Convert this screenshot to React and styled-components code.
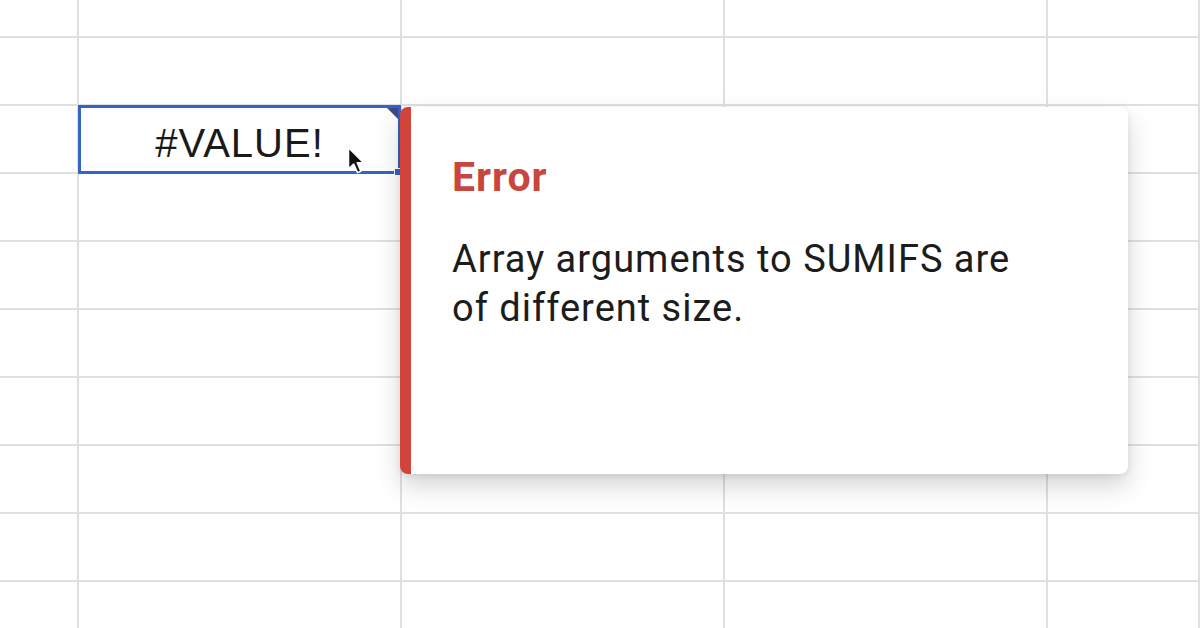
import React from "react";
import styled, { createGlobalStyle } from "styled-components";

const GlobalStyle = createGlobalStyle`
  html, body {
    margin: 0;
    padding: 0;
    background: #ffffff;
    overflow: hidden;
  }
  * { box-sizing: border-box; }
`;

const COLS = [79, 323, 323, 323, 152];
const ROWS = [38, 68, 68, 68, 68, 68, 68, 68, 68, 68];

const Sheet = styled.div`
  position: relative;
  width: 1200px;
  height: 628px;
  overflow: hidden;
  background: #ffffff;
`;

const Grid = styled.div`
  display: grid;
  grid-template-columns: ${COLS.map((c) => `${c}px`).join(" ")};
  grid-template-rows: ${ROWS.map((r) => `${r}px`).join(" ")};
`;

const Cell = styled.div`
  position: relative;
  border-right: 2px solid #e0e0e0;
  border-bottom: 2px solid #e0e0e0;
  display: flex;
  align-items: center;
  justify-content: center;
  font-family: "Liberation Sans", Arial, sans-serif;
  font-size: 40px;
  letter-spacing: 1px;
  color: #1a1a1a;
  padding-top: 8px;

  ${(p) =>
    p.$selected &&
    `
    &::after {
      content: "";
      position: absolute;
      left: -1px;
      top: -1px;
      right: -1px;
      bottom: -2px;
      border: 3px solid #3266c0;
      pointer-events: none;
    }
  `}
`;

/* error marker in the cell's top-right corner */
const ErrorCorner = styled.span`
  position: absolute;
  top: 2px;
  right: 2px;
  width: 0;
  height: 0;
  border-top: 11px solid #3f4a86;
  border-left: 11px solid transparent;
`;

/* fill handle at the selection's bottom-right */
const FillHandle = styled.span`
  position: absolute;
  right: -2px;
  bottom: -4px;
  width: 8px;
  height: 8px;
  background: #3266c0;
  border: 1px solid #ffffff;
  border-right: none;
  z-index: 2;
`;

const Pointer = styled.svg`
  position: absolute;
  left: 347px;
  top: 146px;
  z-index: 3;
`;

const Tooltip = styled.div`
  position: absolute;
  left: 400px;
  top: 107px;
  width: 728px;
  height: 367px;
  background: #ffffff;
  border-left: 11px solid #d2433b;
  border-radius: 8px;
  box-shadow: 0 12px 26px rgba(0, 0, 0, 0.17), 0 2px 6px rgba(0, 0, 0, 0.08);
  padding: 50px 40px 0 41px;
  font-family: Roboto, "Noto Sans", sans-serif;
  z-index: 4;
`;

const Title = styled.div`
  font-size: 41px;
  line-height: 41px;
  font-weight: 700;
  letter-spacing: 1px;
  color: #c9463f;
`;

const Message = styled.div`
  margin-top: 37px;
  font-size: 38px;
  line-height: 49px;
  letter-spacing: 1px;
  color: #1c1c1c;
  max-width: 590px;
`;

export default function App() {
  const cells = [];
  ROWS.forEach((_, r) => {
    COLS.forEach((__, c) => {
      const selected = r === 2 && c === 1;
      cells.push(
        <Cell key={`${r}-${c}`} $selected={selected}>
          {selected && (
            <>
              #VALUE!
              <ErrorCorner />
              <FillHandle />
            </>
          )}
        </Cell>
      );
    });
  });

  return (
    <>
      <GlobalStyle />
      <Sheet>
        <Grid>{cells}</Grid>
        <Pointer width="18" height="29" viewBox="0 0 12 19">
          <path
            d="M1 1 L1 15 L4.5 11.8 L7 17.6 L9.2 16.7 L6.8 11 L11 11 Z"
            fill="#111111"
            stroke="#ffffff"
            strokeWidth="1"
            strokeLinejoin="round"
          />
        </Pointer>
        <Tooltip>
          <Title>Error</Title>
          <Message>Array arguments to SUMIFS are of different size.</Message>
        </Tooltip>
      </Sheet>
    </>
  );
}
